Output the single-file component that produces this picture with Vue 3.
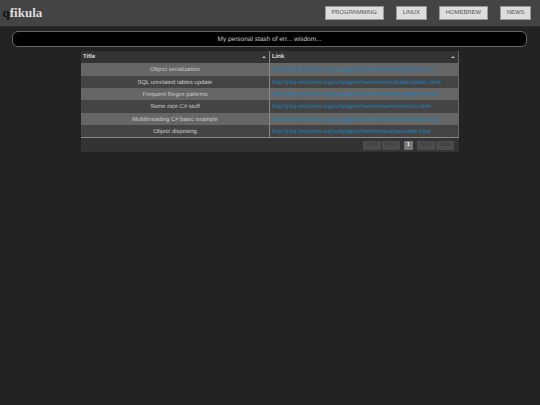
<script setup>
const navItems = ['PROGRAMMING', 'LINUX', 'HOMEBREW', 'NEWS']
const base = 'http://phq.neocities.org/subpages/homebrew/'
const rows = [
  { title: 'Object serialization', link: base + 'serialization.html' },
  { title: 'SQL unrelated tables update', link: base + 'sqltableupdate.html' },
  { title: 'Frequent Regex patterns', link: base + 'regexpatterns.html' },
  { title: 'Some nice C# stuff', link: base + 'minortricks.html' },
  { title: 'Multithreading C# basic example', link: base + 'multithreading.html' },
  { title: 'Object disposing', link: base + 'disposable.html' }
]
</script>

<template>
  <div class="page">
    <header class="topbar">
      <h1 class="logo"><span class="logo-q">q</span>fikula</h1>
      <nav class="nav">
        <a v-for="item in navItems" :key="item" class="nav-btn">{{ item }}</a>
      </nav>
    </header>

    <div class="banner"><span class="banner-text">My personal stash of err... wisdom...</span></div>

    <div class="table-wrap">
      <div class="grid-head">
        <div class="head-cell col-title"><span>Title</span><i class="sort"></i></div>
        <div class="head-cell col-link"><span>Link</span><i class="sort"></i></div>
      </div>
      <div class="grid-body">
        <div v-for="row in rows" :key="row.link" class="grid-row">
          <div class="cell title col-title">{{ row.title }}</div>
          <div class="cell link col-link"><a>{{ row.link }}</a></div>
        </div>
      </div>
      <div class="pager">
        <span class="pg">First</span>
        <span class="pg">Prev</span>
        <span class="pg current">1</span>
        <span class="pg">Next</span>
        <span class="pg">Last</span>
      </div>
    </div>
  </div>
</template>

<style>
html, body {
  margin: 0;
  background: #222;
}
</style>

<style scoped>
.page {
  width: 540px;
  height: 405px;
  overflow: hidden;
  background: #232323;
  font-family: "Liberation Sans", Arial, sans-serif;
  text-rendering: geometricPrecision;
}

.topbar {
  height: 27px;
  box-sizing: border-box;
  display: flex;
  align-items: center;
  justify-content: space-between;
  padding: 0 9px 0 2.5px;
  background: #444;
  border-bottom: 1px solid #2c2c2c;
}

.logo {
  margin: 0;
  font-family: "Liberation Serif", "Times New Roman", serif;
  font-size: 13px;
  font-weight: bold;
  color: #ddd;
}

.logo-q {
  color: #111;
}

.nav {
  display: flex;
  gap: 12.5px;
}

.nav-btn {
  display: block;
  height: 14px;
  line-height: 13px;
  padding: 0 5.7px;
  background: #ddd;
  border: 1px solid #999;
  box-sizing: border-box;
  color: #555;
  font-size: 5.85px;
}

.banner {
  height: 16px;
  margin: 4px 13px 0 12px;
  box-sizing: border-box;
  background: #000;
  border: 1px solid #666;
  border-radius: 6px;
  color: #ccc;
  font-size: 6.5px;
  line-height: 15px;
  text-align: center;
}

/* keeps the small text from picking up coloured fringes */
.banner-text {
  display: inline-block;
  opacity: 0.99;
}

.table-wrap {
  width: 378px;
  margin: 4px 0 0 81px;
  background: #333;
}

.grid-head {
  display: flex;
  height: 12.33px;
  background: #333;
}

.col-title {
  width: 189px;
  border-right: 1px solid #888;
}

.col-link {
  flex: 1;
  border-right: 1px solid #666;
}

.head-cell {
  position: relative;
  box-sizing: border-box;
  padding: 0 2px;
  color: #ddd;
  font-size: 6px;
  font-weight: bold;
  line-height: 13px;
}

.sort {
  position: absolute;
  right: 3.5px;
  top: 4.5px;
  width: 0;
  height: 0;
  border-left: 2.5px solid transparent;
  border-right: 2.5px solid transparent;
  border-bottom: 2.5px solid #bbb;
}

.grid-body {
  border-bottom: 1px solid #888;
}

.grid-row {
  display: flex;
  height: 12.33px;
  font-size: 5.9px;
  line-height: 15.5px;
}

.grid-row:nth-child(odd) {
  background: #666;
}

.grid-row:nth-child(even) {
  background: #444;
}

.cell {
  box-sizing: border-box;
  padding: 0 2px;
  white-space: nowrap;
  overflow: hidden;
}

.title {
  text-align: center;
  color: #ccc;
}

.link a {
  color: #1b82bd;
}

.pager {
  height: 14px;
  display: flex;
  justify-content: flex-end;
  align-items: center;
  padding-right: 5px;
}

.pg {
  box-sizing: border-box;
  width: 18px;
  height: 9px;
  margin-left: 1px;
  line-height: 9px;
  text-align: center;
  background: #4c4c4c;
  border-radius: 1px;
  color: #383838;
  font-size: 5.9px;
}

.pg.current {
  width: 9px;
  margin: 0 3px 0 4px;
  background: #777;
  color: #eee;
  font-weight: bold;
}
</style>
